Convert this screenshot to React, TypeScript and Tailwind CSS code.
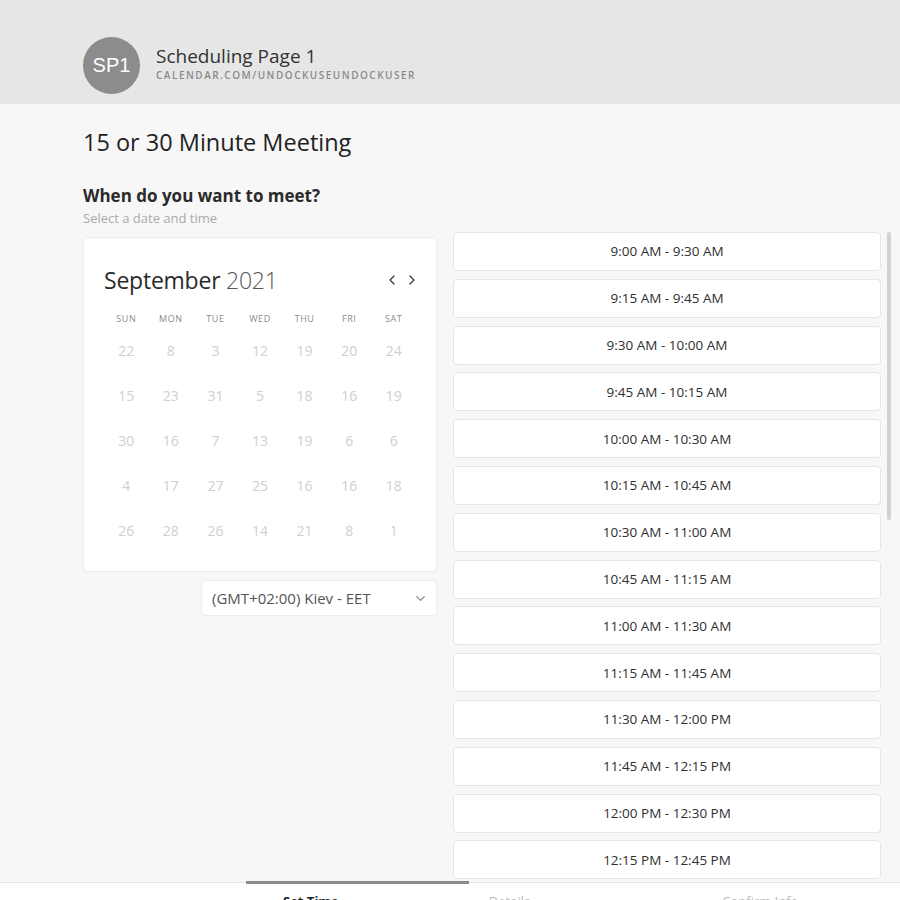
import { FiChevronLeft, FiChevronRight, FiChevronDown } from "react-icons/fi";

const days = ["Sun", "Mon", "Tue", "Wed", "Thu", "Fri", "Sat"];

const weeks = [
    [22, 8, 3, 12, 19, 20, 24],
    [15, 23, 31, 5, 18, 16, 19],
    [30, 16, 7, 13, 19, 6, 6],
    [4, 17, 27, 25, 16, 16, 18],
    [26, 28, 26, 14, 21, 8, 1],
];

const slots = [
    "9:00 AM - 9:30 AM",
    "9:15 AM - 9:45 AM",
    "9:30 AM - 10:00 AM",
    "9:45 AM - 10:15 AM",
    "10:00 AM - 10:30 AM",
    "10:15 AM - 10:45 AM",
    "10:30 AM - 11:00 AM",
    "10:45 AM - 11:15 AM",
    "11:00 AM - 11:30 AM",
    "11:15 AM - 11:45 AM",
    "11:30 AM - 12:00 PM",
    "11:45 AM - 12:15 PM",
    "12:00 PM - 12:30 PM",
    "12:15 PM - 12:45 PM",
    "12:30 PM - 1:00 PM",
];

function Header() {
    return (
        <header className="h-[104px] shrink-0 bg-[#e6e6e6] flex items-center gap-4 pl-[83px] pt-[26px]">
            <div className="w-[57px] h-[57px] rounded-full bg-[#8c8c8c] flex items-center justify-center text-white text-[20px] font-['Liberation_Sans',Arial,sans-serif]">
                SP1
            </div>
            <div className="flex flex-col mt-[-4px]">
                <h2 className="text-[19px] leading-[24px] text-[#333]">Scheduling Page 1</h2>
                <p className="text-[10px] leading-[14px] font-semibold tracking-[0.15em] text-[#8a8a8a]">
                    CALENDAR.COM/UNDOCKUSEUNDOCKUSER
                </p>
            </div>
        </header>
    );
}

function Calendar() {
    return (
        <div className="bg-white border border-[#ececec] rounded-[4px] px-5 pt-[24px] pb-[18px] mt-[8px]">
            <div className="h-[36px] flex items-center justify-between">
                <p className="text-[23px] text-[#2b2b2b] tracking-[-0.01em]">
                    September <span className="font-light text-[#555]">2021</span>
                </p>
                <div className="flex items-center gap-[4px] text-[#333] mr-[-4px]">
                    <FiChevronLeft size={16} strokeWidth={1.8} />
                    <FiChevronRight size={16} strokeWidth={1.8} />
                </div>
            </div>
            <div className="grid grid-cols-7 mt-[12px] h-[18px] items-center">
                {days.map((d) => (
                    <span key={d} className="text-center text-[9px] uppercase tracking-[0.06em] text-[#8c8c8c]">
                        {d}
                    </span>
                ))}
            </div>
            {weeks.map((w, i) => (
                <div key={i} className="grid grid-cols-7 h-[45px] items-center">
                    {w.map((n, j) => (
                        <span key={j} className="text-center text-[14px] text-[#cfcfcf]">
                            {n}
                        </span>
                    ))}
                </div>
            ))}
        </div>
    );
}

function TimeList() {
    return (
        <div className="flex-1 flex gap-[6px] overflow-hidden pt-[3px]">
            <div className="flex-1 flex flex-col gap-[7.8px]">
                {slots.map((s) => (
                    <button
                        key={s}
                        className="h-[39px] shrink-0 bg-white border border-[#e6e6e6] rounded-[4px] text-[13.5px] text-[#2f2f2f]"
                    >
                        {s}
                    </button>
                ))}
            </div>
            <div className="w-[4px] shrink-0">
                <div className="h-[288px] bg-[#d2d2d2] rounded-full" />
            </div>
        </div>
    );
}

export default function App() {
    return (
        <div className="w-[900px] h-[900px] overflow-hidden bg-[#f7f7f7] flex flex-col font-['Open_Sans',sans-serif]">
            <Header />
            <main className="h-[778px] shrink-0 overflow-hidden pl-[83px] pr-[9px]">
                <h1 className="text-[23.5px] leading-[32px] text-[#222] mt-[22px]">15 or 30 Minute Meeting</h1>
                <h3 className="text-[17px] leading-[22px] font-bold text-[#2a2a2a] mt-[27px]">When do you want to meet?</h3>
                <p className="text-[13px] leading-[18px] text-[#aaa] mt-[2px]">Select a date and time</p>
                <div className="flex gap-4 mt-[2px] h-[700px]">
                    <div className="w-[354px] shrink-0 flex flex-col">
                        <Calendar />
                        <div className="self-end mt-[8px] w-[236px] h-[36px] bg-white border border-[#ececec] rounded-[4px] flex items-center justify-between pl-[10px] pr-[8px] text-[15px] text-[#555]">
                            <span>(GMT+02:00) Kiev - EET</span>
                            <FiChevronDown size={15} className="text-[#888]" />
                        </div>
                    </div>
                    <TimeList />
                </div>
            </main>
            <footer className="relative h-[40px] shrink-0 bg-white border-t border-[#e4e4e4]">
                <div className="absolute left-[246px] top-[-2px] w-[223px] h-[3px] bg-[#8a8a8a]" />
                <div className="flex items-start pt-[9px] text-[13px]">
                    <span className="ml-[283px] font-bold text-[#222]">Set Time</span>
                    <span className="ml-[150px] text-[#bbb]">Details</span>
                    <span className="ml-[170px] flex items-center gap-2 text-[#bbb]">
                        <span className="w-[14px] h-[2px] bg-[#bbb]" />
                        Confirm Info
                    </span>
                </div>
            </footer>
        </div>
    );
}
